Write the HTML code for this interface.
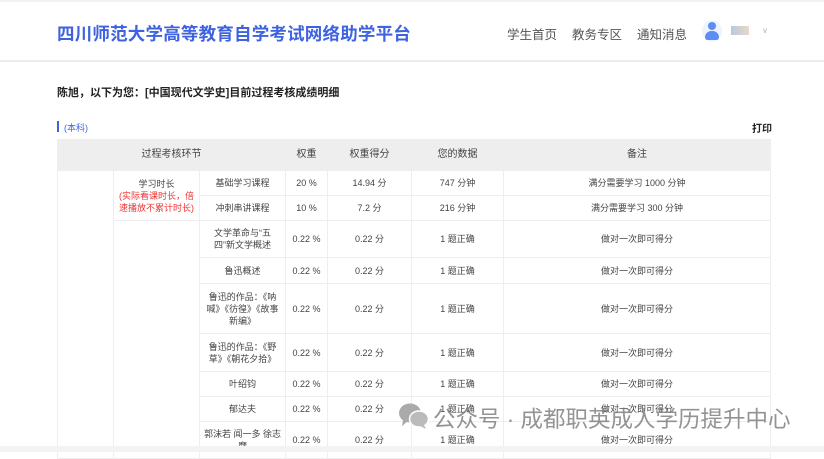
<!DOCTYPE html>
<html><head><meta charset="utf-8"><style>
*{margin:0;padding:0;box-sizing:border-box}
body{width:824px;height:452px;overflow:hidden;background:#fff;font-family:"Liberation Sans","Noto Sans CJK SC",sans-serif;position:relative;color:#333}
.a{position:absolute}
.hd{left:0;top:0;width:824px;height:62px;background:#fff;border-top:2px solid #f2f2f2;border-bottom:2px solid #ececec}
.t{left:57px;top:21px;font-size:17.5px;font-weight:bold;color:#3f63e0;letter-spacing:0.2px}
.nav{top:24px;font-size:12.5px;color:#555}
table{position:absolute;left:57px;top:139px;width:714px;border-collapse:collapse;font-size:9px;color:#444;text-align:center}
td,th{border:1px solid #eee;line-height:12px;padding:0 4px}
th{background:#eee;font-weight:normal;font-size:10px;height:31px;border-color:#eee}
</style></head><body>
<div class="a hd"></div>
<div class="a t">四川师范大学高等教育自学考试网络助学平台</div>
<div class="a nav" style="left:507px">学生首页</div>
<div class="a nav" style="left:572px">教务专区</div>
<div class="a nav" style="left:637px">通知消息</div>
<div class="a" style="left:702px;top:20px;width:20px;height:22px;border-radius:50%;background:#eef4ff"></div>
<div class="a" style="left:708px;top:22px;width:8px;height:8px;border-radius:50%;background:#5b8ef0"></div>
<div class="a" style="left:705px;top:31px;width:14px;height:9px;border-radius:7px 7px 3px 3px;background:#5b8ef0"></div>
<div class="a" style="left:731px;top:26px;width:18px;height:9px;background:linear-gradient(90deg,#b9c9e0,#e8d8c8)"></div>
<div class="a" style="left:763px;top:26px;font-size:8px;color:#aaa">v</div>
<div class="a" style="left:57px;top:84px;font-size:11px;font-weight:bold;color:#222">陈旭，以下为您：[中国现代文学史]目前过程考核成绩明细</div>
<div class="a" style="left:57px;top:121px;width:2px;height:11px;background:#3f63e0"></div>
<div class="a" style="left:64px;top:121px;font-size:9px;color:#3f63e0">(本科)</div>
<div class="a" style="left:752px;top:120px;font-size:10px;font-weight:bold;color:#222">打印</div>
<table>
<colgroup><col style="width:56px"><col style="width:86px"><col style="width:86px"><col style="width:42px"><col style="width:84px"><col style="width:92px"><col></colgroup>
<tr><th colspan="3">过程考核环节</th><th>权重</th><th>权重得分</th><th>您的数据</th><th>备注</th></tr>
<tr style="height:25px"><td rowspan="10" style="border-left-color:#eee"></td><td rowspan="2">学习时长<br><span style="color:#e33">(实际看课时长，倍速播放不累计时长)</span></td><td>基础学习课程</td><td>20 %</td><td>14.94 分</td><td>747 分钟</td><td>满分需要学习 1000 分钟</td></tr>
<tr style="height:25px"><td>冲刺串讲课程</td><td>10 %</td><td>7.2 分</td><td>216 分钟</td><td>满分需要学习 300 分钟</td></tr>
<tr style="height:37px"><td rowspan="8"></td><td>文学革命与“五四”新文学概述</td><td>0.22 %</td><td>0.22 分</td><td>1 题正确</td><td>做对一次即可得分</td></tr>
<tr style="height:26px"><td>鲁迅概述</td><td>0.22 %</td><td>0.22 分</td><td>1 题正确</td><td>做对一次即可得分</td></tr>
<tr style="height:50px"><td>鲁迅的作品：《呐喊》《彷徨》《故事新编》</td><td>0.22 %</td><td>0.22 分</td><td>1 题正确</td><td>做对一次即可得分</td></tr>
<tr style="height:38px"><td>鲁迅的作品：《野草》《朝花夕拾》</td><td>0.22 %</td><td>0.22 分</td><td>1 题正确</td><td>做对一次即可得分</td></tr>
<tr style="height:25px"><td>叶绍钧</td><td>0.22 %</td><td>0.22 分</td><td>1 题正确</td><td>做对一次即可得分</td></tr>
<tr style="height:25px"><td>郁达夫</td><td>0.22 %</td><td>0.22 分</td><td>1 题正确</td><td>做对一次即可得分</td></tr>
<tr style="height:37px"><td>郭沫若 闻一多 徐志摩</td><td>0.22 %</td><td>0.22 分</td><td>1 题正确</td><td>做对一次即可得分</td></tr>
</table>
<div class="a" style="left:0;top:446px;width:824px;height:6px;background:#f3f3f3"></div>
<svg class="a" style="left:398px;top:402px" width="32" height="28" viewBox="0 0 32 28">
<ellipse cx="12" cy="11" rx="11" ry="9.5" fill="#aaa"/>
<path d="M5 18 L4 24 L10 19Z" fill="#aaa"/>
<ellipse cx="21" cy="17" rx="9.5" ry="8" fill="#bbb" stroke="#fff" stroke-width="1.5"/>
<path d="M26 23 L28 27 L22 24Z" fill="#bbb"/>
</svg>
<div class="a" style="left:433px;top:402px;font-size:22.5px;color:rgba(120,120,120,0.8)">公众号 · 成都职英成人学历提升中心</div>
</body></html>
